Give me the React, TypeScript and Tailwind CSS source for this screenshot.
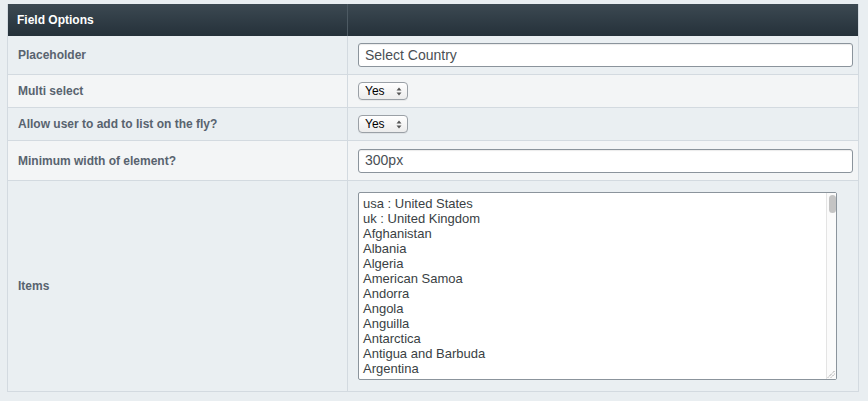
import React from "react"

const countries = [
  "usa : United States",
  "uk : United Kingdom",
  "Afghanistan",
  "Albania",
  "Algeria",
  "American Samoa",
  "Andorra",
  "Angola",
  "Anguilla",
  "Antarctica",
  "Antigua and Barbuda",
  "Argentina",
  "Armenia",
  "Aruba",
  "Australia",
  "Austria",
  "Azerbaijan",
  "Bahamas",
  "Bahrain",
  "Bangladesh",
  "Barbados",
  "Belarus",
  "Belgium",
  "Belize",
]

function Row({
  label,
  shade,
  height,
  children,
}: {
  label: string
  shade: boolean
  height: string
  children: React.ReactNode
}) {
  return (
    <div className={`flex border-b border-[#d3dae0] ${height} ${shade ? "bg-[#eaeff2]" : "bg-[#f3f5f6]"}`}>
      <div className="w-[340px] shrink-0 border-r border-[#d3dae0] pl-[10px] flex items-center">
        <span className="text-[12px] font-bold text-[#58636f]">{label}</span>
      </div>
      <div className="flex-1 pl-[10px] flex items-center">{children}</div>
    </div>
  )
}

function YesSelect() {
  return (
    <div className="flex items-center justify-between w-[50px] h-[18px] rounded-[4px] border border-[#9aa0a6] bg-gradient-to-b from-white to-[#ececec] pl-[6px] pr-[5px] shadow-[0_1px_0_rgba(0,0,0,0.05)]">
      <span className="text-[12px] text-black leading-none">Yes</span>
      <svg width="6" height="9" viewBox="0 0 6 9">
        <path d="M3 0.5 L5.5 3.5 H0.5 Z" fill="#555" />
        <path d="M3 8.5 L5.5 5.5 H0.5 Z" fill="#555" />
      </svg>
    </div>
  )
}

export default function App() {
  return (
    <div className="w-[868px] h-[401px] bg-[#e9eef1] pt-[4px] pl-[7px]" style={{ fontFamily: '"Liberation Sans", Arial, sans-serif' }}>
      <div className="w-[852px] border-l border-r border-[#d3dae0]">
        <div className="flex h-[32px] bg-gradient-to-b from-[#3c4952] to-[#25313a]">
          <div className="w-[340px] shrink-0 border-r border-[#4d5a63] pl-[9px] flex items-center">
            <span className="text-[12px] font-bold text-white">Field Options</span>
          </div>
          <div className="flex-1" />
        </div>

        <Row label="Placeholder" shade={true} height="h-[39px]">
          <div className="w-[495px] h-[24px] rounded-[3px] border border-[#8b949c] bg-white flex items-center pl-[6px] shadow-[inset_0_1px_1px_rgba(0,0,0,0.08)]">
            <span className="text-[14px] text-[#4a4f55]">Select Country</span>
          </div>
        </Row>

        <Row label="Multi select" shade={false} height="h-[33px]">
          <YesSelect />
        </Row>

        <Row label="Allow user to add to list on the fly?" shade={true} height="h-[33px]">
          <YesSelect />
        </Row>

        <Row label="Minimum width of element?" shade={false} height="h-[40px]">
          <div className="w-[495px] h-[24px] rounded-[3px] border border-[#8b949c] bg-white flex items-center pl-[6px] shadow-[inset_0_1px_1px_rgba(0,0,0,0.08)]">
            <span className="text-[14px] text-[#4a4f55]">300px</span>
          </div>
        </Row>

        <Row label="Items" shade={true} height="h-[211px]">
          <div className="relative w-[479px] h-[188px] mb-[1px]">
            <textarea
              readOnly
              className="block w-full h-full rounded-[2px] border border-[#8b949c] bg-white pt-[3px] pl-[4px] pr-[12px] text-[13px] leading-[15px] text-[#3a3f44] resize-none outline-none overflow-hidden"
              style={{ fontFamily: '"Liberation Sans", Arial, sans-serif' }}
              value={countries.join("\n")}
            />
            {/* scroll track overlay */}
            <div className="absolute top-[1px] bottom-[1px] right-[1px] w-[10px] bg-[#fbfbfb] border-l border-[#e4e4e4]">
              <div className="mt-[2px] ml-[2px] w-[7px] h-[18px] rounded-full bg-[#c4c4c4]" />
            </div>
            {/* resize grip */}
            <svg className="absolute right-[2px] bottom-[2px]" width="8" height="8" viewBox="0 0 8 8">
              <path d="M1 7.5 L7.5 1 M4 7.5 L7.5 4" stroke="#7a7a7a" strokeWidth="1" strokeDasharray="1 1" />
            </svg>
          </div>
        </Row>
      </div>
    </div>
  )
}
